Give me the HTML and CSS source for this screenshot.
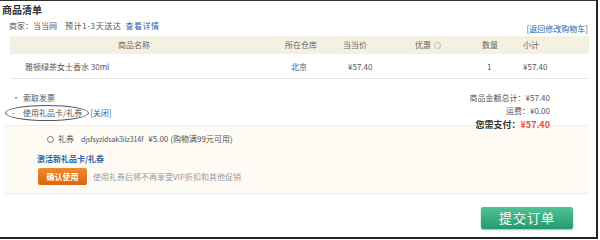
FILE: index.html
```html
<!DOCTYPE html>
<html lang="zh">
<head>
<meta charset="utf-8">
<link rel="stylesheet" href="styles.css">
</head>
<body>
<div class="page">
  <div class="title">商品清单</div>
  <div class="merchant">
    <div class="merchant-info">商家：当当网<span class="eta">预计1-3天送达</span><a class="link detail">查看详情</a></div>
    <a class="link back">[返回修改购物车]</a>
  </div>
  <div class="table">
    <div class="row head">
      <div class="c1">商品名称</div>
      <div class="c2">所在仓库</div>
      <div class="c3">当当价</div>
      <div class="c4">优惠 <span class="q"></span></div>
      <div class="c5">数量</div>
      <div class="c6">小计</div>
    </div>
    <div class="row data">
      <div class="c1">雅顿绿茶女士香水 30ml</div>
      <div class="c2">北京</div>
      <div class="c3">¥57.40</div>
      <div class="c4"></div>
      <div class="c5">1</div>
      <div class="c6">¥57.40</div>
    </div>
  </div>
  <div class="lower">
    <div class="options">
      <div class="opt"><span class="mark">•</span>索取发票</div>
      <div class="opt gift"><span class="mark">-</span>使用礼品卡/礼券<span class="oval"></span><a class="link close">[关闭]</a></div>
    </div>
    <div class="totals">
      <div>商品金额总计：¥57.40</div>
      <div>运费：¥0.00</div>
      <div class="pay">您需支付：<span class="price">¥57.40</span></div>
    </div>
  </div>
  <div class="panel">
    <div class="coupon"><span class="radio"></span>礼券<span class="code">djsfsyzldsak3ilz314f</span><span class="amt">¥5.00</span>(购物满99元可用)</div>
    <div class="activate">激活新礼品卡/礼券</div>
    <div class="confirm"><span class="btn-orange">确认使用</span><span class="hint">使用礼券后将不再享受VIP折扣和其他促销</span></div>
  </div>
  <div class="submit-row"><span class="btn-green">提交订单</span></div>
</div>
</body>
</html>
```
FILE: styles.css
```css
html, body { margin: 0; padding: 0; background: #fff; }
body { font-family: "Noto Sans CJK SC", "Liberation Sans", sans-serif; font-size: 8px; color: #555; }
.page {
  width: 596px; height: 236px;
  border-top: 1px solid #333;
  border-right: 2px solid #222;
  border-bottom: 2px solid #222;
  overflow: hidden;
}
.link { color: #2c62a8; }
.title { height: 17px; line-height: 17px; padding-left: 2px; font-size: 10px; font-weight: bold; color: #333; }
.merchant { display: flex; justify-content: space-between; height: 16px; line-height: 16px; padding-left: 9px; padding-right: 8px; }
.eta { margin-left: 8px; letter-spacing: 0.6px; }
.detail { margin-left: 4px; letter-spacing: 0.5px; }
.back { padding-top: 3px; }
.table { margin: 2px 7px 0 10px; }
.row { display: grid; grid-template-columns: 275px 58px 70px 67px 40px 70px; }
.head { height: 18px; line-height: 18px; background: #f4f0e2; color: #666; }
.data { height: 24px; line-height: 26px; border-bottom: 1px solid #e6e6e6; }
.head .c1 { padding-left: 108px; }
.head .c4 { padding-left: 2px; display: flex; align-items: center; gap: 3px; }
.head .c5 { padding-left: 2px; }
.head .c6 { padding-left: 3px; }
.q { width: 5px; height: 5px; border: 1px solid #bbb; border-radius: 50%; display: inline-block; }
.data .c1 { padding-left: 15px; }
.data .c2 { padding-left: 6px; }
.data .c3 { padding-left: 5px; }
.data .c5 { padding-left: 7px; }
.data .c6 { padding-left: 3px; }
.lower { display: flex; justify-content: space-between; height: 46px; padding-top: 12px; box-sizing: border-box; }
.options { padding-left: 12px; }
.opt { height: 15px; line-height: 14px; position: relative; }
.mark { display: inline-block; width: 11px; }
.oval { position: absolute; left: -7px; top: -1px; width: 82px; height: 14px; border: 1px solid #555; border-radius: 50%; }
.close { margin-left: 8px; }
.totals { padding-right: 46px; text-align: right; line-height: 13px; }
.pay { font-weight: bold; font-size: 9px; color: #333; line-height: 15px; }
.price { color: #e5533f; }
.panel { margin: 0 7px 0 5px; background: #fdfbf4; border-top: 1px solid #f2eee2; border-bottom: 1px solid #efece2; padding: 6px 0 8px 0; }
.coupon { height: 14px; line-height: 14px; padding-left: 42px; display: flex; align-items: center; }
.radio { width: 5px; height: 5px; border: 1px solid #777; border-radius: 50%; margin-right: 4px; background: #fff; }
.code { margin-left: 7px; font-size: 7px; letter-spacing: -0.1px; }
.amt { margin-left: 5px; margin-right: 2px; }
.activate { height: 14px; line-height: 14px; margin-top: 6px; padding-left: 32px; color: #2c62a8; font-weight: bold; }
.confirm { margin-top: 2px; padding-left: 33px; display: flex; align-items: center; gap: 6px; height: 17px; }
.btn-orange { width: 49px; height: 17px; line-height: 17px; text-align: center; color: #fff; font-weight: bold; border-radius: 2px; background: linear-gradient(#f08a2e, #d9650f); }
.hint { color: #999; }
.submit-row { display: flex; justify-content: flex-end; padding: 13px 23px 0 0; }
.btn-green { width: 92px; height: 22px; line-height: 22px; text-align: center; color: #fff; font-size: 13px; border-radius: 2px; background: linear-gradient(#4fc396, #239a6d); box-shadow: 0 1px 2px rgba(0,0,0,0.3); letter-spacing: 1px; }
```
